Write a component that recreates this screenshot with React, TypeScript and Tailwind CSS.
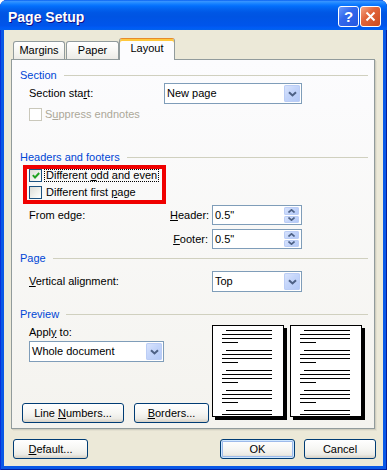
import type { ReactNode } from 'react';

// Windows XP "Page Setup" dialog, Layout tab.

const ARROW_BG =
  'bg-[linear-gradient(135deg,#DCE6FD_0%,#C4D5FA_45%,#B2C8F7_100%)] shadow-[inset_0_0_0_1px_#BBCDF5]';

function Chevron({ up = false }: { up?: boolean }) {
  return (
    <svg width="7" height="4" viewBox="0 0 7 4" className="block">
      <path
        d={up ? 'M0.5 3.5 L3.5 0.8 L6.5 3.5' : 'M0.5 0.5 L3.5 3.2 L6.5 0.5'}
        stroke="#4D6185"
        strokeWidth="1.6"
        fill="none"
      />
    </svg>
  );
}

function Combo({ value, className = '' }: { value: string; className?: string }) {
  return (
    <div className={`flex h-[21px] border border-[#7F9DB9] bg-white ${className}`}>
      <span className="flex-1 pl-[2px] leading-[19px]">{value}</span>
      <span className={`m-px flex w-[16px] items-center justify-center rounded-[2px] ${ARROW_BG}`}>
        <svg width="9" height="6" viewBox="0 0 9 6" className="block">
          <path d="M1 1.2 L4.5 4.5 L8 1.2" stroke="#4D6185" strokeWidth="2" fill="none" />
        </svg>
      </span>
    </div>
  );
}

function Spin({ value }: { value: string }) {
  return (
    <div className="flex h-[20px] w-[90px] border border-[#7F9DB9] bg-white">
      <span className="flex-1 pl-[2px] leading-[18px]">{value}</span>
      <span className="my-px mr-[2px] flex w-[15px] flex-col gap-px">
        <span className={`flex flex-1 items-center justify-center rounded-[2px] ${ARROW_BG}`}>
          <Chevron up />
        </span>
        <span className={`flex flex-1 items-center justify-center rounded-[2px] ${ARROW_BG}`}>
          <Chevron />
        </span>
      </span>
    </div>
  );
}

function Check({ checked = false, disabled = false }: { checked?: boolean; disabled?: boolean }) {
  return (
    <span
      className={`flex h-[13px] w-[13px] shrink-0 items-center justify-center border ${
        disabled
          ? 'border-[#CAC8BB] bg-white'
          : 'border-[#1C5180] bg-[linear-gradient(135deg,#DCDCD7_0%,#F2F2EE_60%,#FFFFFF_100%)]'
      }`}
    >
      {checked && (
        <svg width="8" height="7" viewBox="0 0 8 7" className="block">
          <path d="M0.8 3.2 L3 5.5 L7.2 1" stroke="#21A121" strokeWidth="1.9" fill="none" />
        </svg>
      )}
    </span>
  );
}

function GroupHeader({ children }: { children: ReactNode }) {
  return (
    <div className="flex h-[14px] items-center gap-[7px]">
      <span className="leading-[14px] text-[#0046D5]">{children}</span>
      <span className="h-px flex-1 bg-[#D0D0BF]" />
    </div>
  );
}

function XpButton({
  children,
  className = '',
  isDefault = false,
}: {
  children: ReactNode;
  className?: string;
  isDefault?: boolean;
}) {
  return (
    <button
      type="button"
      className={`h-[20px] rounded-[3px] border border-[#003C74] bg-[linear-gradient(180deg,#FFFFFF_0%,#F6F6F3_50%,#ECEBE6_80%,#D6D0C5_100%)] text-[11px] leading-none text-black ${
        isDefault ? 'shadow-[inset_0_0_0_1px_#CEE7FF,inset_0_0_0_2px_#9DBAEA]' : ''
      } ${className}`}
    >
      {children}
    </button>
  );
}

function PreviewPage() {
  const groups = [5, 25, 45, 65, 85];
  return (
    <svg width="76" height="96" viewBox="0 0 76 96" className="block">
      <rect x="72" y="3" width="3" height="92" fill="#000" />
      <rect x="3" y="92" width="72" height="3" fill="#000" />
      <rect x="0.5" y="0.5" width="71" height="91" fill="#fff" stroke="#000" />
      {groups.map((g) => (
        <g key={g} fill="#000">
          <rect x="14" y={g} width="46" height="1" />
          <rect x="10" y={g + 4} width="50" height="1" />
          {g + 8 < 91 && <rect x="10" y={g + 8} width="50" height="1" />}
          {g + 12 < 91 && <rect x="10" y={g + 12} width="16" height="1" />}
        </g>
      ))}
    </svg>
  );
}

export default function App() {
  return (
    <div className="h-[470px] w-[387px] bg-white font-['Liberation_Sans',Arial,sans-serif] text-[11px] text-black">
      <div className="flex h-full flex-col rounded-t-[7px] bg-[#0A58E6] shadow-[inset_1px_0_0_#0831D9,inset_-1px_0_0_#001EA0,inset_0_-1px_0_#001EA0]">
        {/* Title bar */}
        <div className="flex h-[30px] shrink-0 items-center rounded-t-[7px] bg-[linear-gradient(180deg,#0058EE_0%,#3A93FF_4%,#288EFF_8%,#127DFF_14%,#036FFC_20%,#0262EE_30%,#0057E5_42%,#0054E3_55%,#0055EB_85%,#005BF5_92%,#0262EE_100%)] pl-[8px] pr-[6px] pt-[3px]">
          <span className="flex-1 text-[14px] font-bold leading-none text-white [text-shadow:1px_1px_0_#0F1089]">
            Page Setup
          </span>
          <span className="flex h-[21px] w-[21px] items-center justify-center rounded-[3px] border border-white bg-[linear-gradient(135deg,#6C9BFB_0%,#3468EC_40%,#2356E0_100%)] text-[15px] font-bold leading-none text-white">
            ?
          </span>
          <span className="ml-px flex h-[21px] w-[21px] items-center justify-center rounded-[3px] border border-white bg-[linear-gradient(135deg,#F3A586_0%,#E2653B_40%,#CC4A1E_100%)]">
            <svg width="11" height="11" viewBox="0 0 11 11" className="block">
              <path d="M1.5 1.5 L9.5 9.5 M9.5 1.5 L1.5 9.5" stroke="#fff" strokeWidth="2" />
            </svg>
          </span>
        </div>

        {/* Client area */}
        <div className="mx-[4px] mb-[4px] flex-1 bg-[#ECE9D8] pt-[8px]">
          <div className="ml-[7px] w-[364px]">
            {/* Tabs */}
            <div className="relative z-10 flex h-[22px] items-end pl-[2px]">
              <div className="mb-px flex h-[18px] w-[52px] items-center justify-center rounded-t-[3px] border border-b-0 border-[#919B9C] bg-[linear-gradient(180deg,#FFFFFF_0%,#F7F7F4_50%,#ECEBE6_100%)]">
                Margins
              </div>
              <div className="mb-px ml-px flex h-[18px] w-[53px] items-center justify-center rounded-t-[3px] border border-b-0 border-[#919B9C] bg-[linear-gradient(180deg,#FFFFFF_0%,#F7F7F4_50%,#ECEBE6_100%)]">
                Paper
              </div>
              <div className="flex h-[22px] w-[56px] items-center justify-center rounded-t-[3px] border border-b-0 border-[#919B9C] border-t-[#E68B2C] bg-[#FCFCFE] pb-[2px] shadow-[inset_0_2px_0_#FFC83C]">
                Layout
              </div>
            </div>

            {/* Panel */}
            <div className="-mt-px h-[370px] border border-[#919B9C] bg-[linear-gradient(180deg,#FCFCFE_0%,#F4F3EE_100%)] pl-[8px] pr-[6px] shadow-[1px_1px_0_#D0CEBF,2px_2px_0_#E3E0D0]">
              <div className="mt-[8px]">
                <GroupHeader>Section</GroupHeader>
              </div>
              <div className="mt-px flex h-[21px] items-center pl-[9px]">
                <span className="w-[135px]">
                  Section sta<u>r</u>t:
                </span>
                <Combo value="New page" className="w-[138px]" />
              </div>
              <div className="mt-[4px] flex h-[13px] items-center pl-[9px]">
                <Check disabled />
                <span className="ml-[3px] text-[#ACA899]">
                  S<u>u</u>ppress endnotes
                </span>
              </div>

              <div className="mt-[29px]">
                <GroupHeader>Headers and footers</GroupHeader>
              </div>
              <div className="ml-[3px] mt-px h-[39px] w-[143px] border-4 border-[#F00000] pl-[2px]">
                <div className="flex h-[13px] items-center">
                  <Check checked />
                  <span className="ml-[2px] border border-dotted border-black pr-px pl-px leading-[11px]">
                    Different <u>o</u>dd and even
                  </span>
                </div>
                <div className="mt-[4px] flex h-[13px] items-center">
                  <Check />
                  <span className="ml-[2px] border border-transparent pl-px leading-[11px]">
                    Different first <u>p</u>age
                  </span>
                </div>
              </div>
              <div className="mt-px flex h-[20px] items-center pl-[9px]">
                <span className="w-[141px]">From edge:</span>
                <span className="w-[38px] text-right">
                  <u>H</u>eader:
                </span>
                <span className="ml-[4px]">
                  <Spin value={'0.5"'} />
                </span>
              </div>
              <div className="mt-[4px] flex h-[20px] items-center pl-[9px]">
                <span className="w-[141px]" />
                <span className="w-[38px] text-right">
                  <u>F</u>ooter:
                </span>
                <span className="ml-[4px]">
                  <Spin value={'0.5"'} />
                </span>
              </div>

              <div className="mt-[2px]">
                <GroupHeader>Page</GroupHeader>
              </div>
              <div className="mt-[6px] flex h-[21px] items-center pl-[9px]">
                <span className="w-[183px]">
                  <u>V</u>ertical alignment:
                </span>
                <Combo value="Top" className="w-[90px]" />
              </div>

              <div className="mt-[15px]">
                <GroupHeader>Preview</GroupHeader>
              </div>
              <div className="flex">
                <div className="w-[192px]">
                  <div className="mt-[4px] h-[14px] pl-[9px] leading-[14px]">
                    Appl<u>y</u> to:
                  </div>
                  <div className="mt-[2px] pl-[9px]">
                    <Combo value="Whole document" className="w-[135px]" />
                  </div>
                  <div className="ml-[2px] mt-[41px] flex gap-[10px]">
                    <XpButton className="w-[102px]">
                      Line <u>N</u>umbers...
                    </XpButton>
                    <XpButton className="w-[75px]">
                      <u>B</u>orders...
                    </XpButton>
                  </div>
                </div>
                <div className="mt-[4px] flex gap-[2px]">
                  <PreviewPage />
                  <PreviewPage />
                </div>
              </div>
            </div>
          </div>

          {/* Dialog buttons */}
          <div className="mt-[10px] flex pl-[9px] pr-[7px]">
            <XpButton className="w-[75px]">
              <u>D</u>efault...
            </XpButton>
            <XpButton isDefault className="ml-auto w-[75px]">
              OK
            </XpButton>
            <XpButton className="ml-[9px] w-[72px]">Cancel</XpButton>
          </div>
        </div>
      </div>
    </div>
  );
}
